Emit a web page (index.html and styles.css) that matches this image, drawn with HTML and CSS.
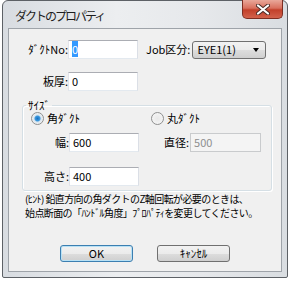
FILE: index.html
```html
<!DOCTYPE html>
<html lang="ja">
<head>
    <meta charset="UTF-8">
    <title>ダクトのプロパティ</title>
    <link rel="stylesheet" href="styles.css">
</head>
<body>

<div class="window">
    <div class="titlebar">
        <span class="title">ダクトのプロパティ</span>
        <div class="close">
            <svg width="14" height="11" viewBox="0 0 14 11">
                <path d="M2 1.5 L12 9.5 M12 1.5 L2 9.5" stroke="#4a2a25" stroke-width="4" stroke-linecap="round"/>
                <path d="M2 1.5 L12 9.5 M12 1.5 L2 9.5" stroke="#ffffff" stroke-width="2.2" stroke-linecap="round"/>
            </svg>
        </div>
    </div>

    <div class="client">
        <div class="row first">
            <span class="lbl">ﾀﾞｸﾄNo:</span>
            <div class="edit"><span class="sel">0</span></div>
            <span class="lbl-job">Job区分:</span>
            <div class="combo">
                <span>EYE1(1)</span>
                <span class="arrow"></span>
            </div>
        </div>

        <div class="row second">
            <span class="lbl">板厚:</span>
            <div class="edit">0</div>
        </div>

        <fieldset class="group">
            <legend>ｻｲｽﾞ</legend>
            <div class="radios">
                <div class="radio-item"><span class="radio on"></span>角ﾀﾞｸﾄ</div>
                <div class="radio-item right"><span class="radio"></span>丸ﾀﾞｸﾄ</div>
            </div>
            <div class="row">
                <span class="lbl inner">幅:</span>
                <div class="edit">600</div>
                <span class="lbl-dia">直径:</span>
                <div class="edit disabled">500</div>
            </div>
            <div class="row last">
                <span class="lbl inner">高さ:</span>
                <div class="edit">400</div>
            </div>
        </fieldset>

        <p class="hint">(ﾋﾝﾄ) 鉛直方向の角ダクトのZ軸回転が必要のときは、<br>始点断面の「ﾊﾝﾄﾞﾙ角度」ﾌﾟﾛﾊﾟﾃｨを変更してください。</p>

        <div class="buttons">
            <div class="btn default">OK</div>
            <div class="btn">ｷｬﾝｾﾙ</div>
        </div>
    </div>
</div>

</body>
</html>
```

FILE: styles.css
```css
body {
    margin: 0;
    background-color: #ffffff;
    font-family: "Noto Sans CJK JP", "Noto Sans", sans-serif;
    font-size: 11px;
    line-height: 13px;
    color: #000;
}

.window {
    position: relative;
    margin-left: 2px;
    width: 274px;
    padding: 0 5px 5px 5px;
    border: 1px solid #5d6166;
    border-radius: 6px 6px 2px 2px;
    background: linear-gradient(to right, #d8dce1, #eceef0 40%, #e6e8eb 70%, #d9dde1);
}

.titlebar {
    height: 27px;
    display: flex;
    align-items: center;
}

.title {
    margin-left: 7px;
    margin-top: 2px;
    font-size: 12px;
    letter-spacing: -2px;
    color: #1e1e1e;
}

.close {
    position: absolute;
    top: -1px;
    right: 4px;
    width: 41px;
    height: 19px;
    border: 1px solid #7e2e22;
    border-top: none;
    border-radius: 0 0 5px 5px;
    background: linear-gradient(to bottom, #e9a89a, #d9705e 45%, #c2402a 55%, #d2624c);
    display: flex;
    align-items: center;
    justify-content: center;
    box-sizing: border-box;
}

.client {
    height: 244px;
    box-sizing: border-box;
    border: 1px solid #9ea3a9;
    background-color: #f0f0f0;
    padding-top: 11px;
}

.row {
    display: flex;
    align-items: center;
}

.row.second {
    margin-top: 13px;
}

.lbl {
    width: 59px;
    text-align: right;
}

.lbl-job {
    margin-left: 8px;
    white-space: nowrap;
}

.lbl-dia {
    margin-left: 25px;
    white-space: nowrap;
}

.edit {
    width: 70px;
    height: 19px;
    box-sizing: border-box;
    background-color: #fff;
    border: 1px solid #abadb3;
    border-left-color: #e2e3ea;
    border-right-color: #dbdfe6;
    border-bottom-color: #e3e9ef;
    padding-left: 3px;
    line-height: 16px;
}

.edit.disabled {
    margin-left: 1px;
    width: 71px;
    background-color: #f4f4f4;
    color: #8e8f8f;
    border-color: #c9cbcd;
}

.sel {
    background-color: #3399ff;
    color: #fff;
}

.combo {
    margin-left: 2px;
    width: 74px;
    height: 18px;
    box-sizing: border-box;
    border: 1px solid #707070;
    border-radius: 3px;
    background: linear-gradient(to bottom, #f2f2f2, #ebebeb 50%, #dddddd 51%, #cfcfcf);
    display: flex;
    align-items: center;
    justify-content: space-between;
    padding: 0 6px 0 4px;
}

.arrow {
    width: 0;
    height: 0;
    border-left: 3px solid transparent;
    border-right: 3px solid transparent;
    border-top: 4px solid #000;
}

.group {
    margin: 8px 0 0 13px;
    width: 247px;
    height: 92px;
    box-sizing: border-box;
    border: 1px solid #d5dfe5;
    border-radius: 3px;
    box-shadow: inset 1px 1px 0 #fff, 1px 1px 0 #fff;
    padding: 0;
}

.group legend {
    margin-left: 3px;
    padding: 0 2px;
}

.radios {
    display: flex;
}

.radio-item {
    display: flex;
    align-items: center;
    gap: 3px;
    margin-left: 8px;
    width: 120px;
}

.radio-item.right {
    margin-left: 0;
}

.radio {
    width: 13px;
    height: 13px;
    box-sizing: border-box;
    border-radius: 50%;
    border: 1px solid #8e8f8f;
    background: radial-gradient(circle, #e8e8e8, #f8f8f8);
}

.radio.on {
    background: radial-gradient(circle, #1a6fbf 0, #3a9ae0 2.5px, #d8e4ee 3.5px, #f4f4f4 6px);
}

.group .row {
    margin-top: 8px;
}

.group .row.last {
    margin-top: 15px;
}

.lbl.inner {
    width: 46px;
}

.hint {
    margin: 1px 0 0 16px;
    font-size: 10px;
    line-height: 14px;
    letter-spacing: -0.6px;
    white-space: nowrap;
}

.buttons {
    display: flex;
    margin-top: 25px;
    margin-left: 51px;
    gap: 24px;
}

.btn {
    width: 73px;
    height: 17px;
    box-sizing: border-box;
    border: 1px solid #707070;
    border-radius: 3px;
    background: linear-gradient(to bottom, #f2f2f2, #ebebeb 50%, #dddddd 51%, #cfcfcf);
    text-align: center;
    line-height: 14px;
}

.btn.default {
    border-color: #3c7fb1;
    box-shadow: inset 0 0 0 1px #b8e1f5;
}
```
